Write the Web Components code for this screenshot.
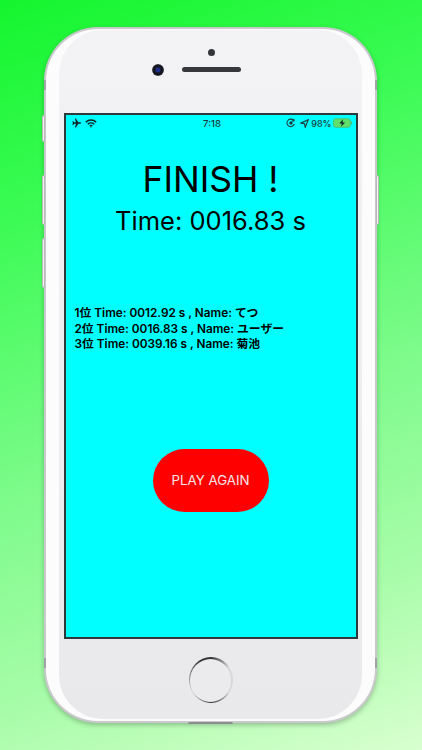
<!DOCTYPE html>
<html lang="ja">
<head>
<meta charset="utf-8">
<title>Finish</title>
<style>
  html, body { margin: 0; height: 100%; }
  body {
    width: 422px; height: 750px; overflow: hidden;
    background: linear-gradient(160deg, #14f52e 0%, #3cfb55 25%, #7cfb8a 55%, #a9fcaa 80%, #d8ffcf 100%);
    font-family: Inter, "Noto Sans CJK JP", sans-serif;
  }
</style>
</head>
<body>
<iphone-frame>
  <status-bar></status-bar>
  <finish-screen time="0016.83">
    <score-row>1位 Time: 0012.92 s , Name: てつ</score-row>
    <score-row>2位 Time: 0016.83 s , Name: ユーザー</score-row>
    <score-row>3位 Time: 0039.16 s , Name: 菊池</score-row>
  </finish-screen>
</iphone-frame>

<script>
// device body: bezel, speaker, home button, side keys
class IphoneFrame extends HTMLElement {
  constructor() {
    super();
    this.attachShadow({ mode: "open" });
  }
  connectedCallback() {
    this.shadowRoot.innerHTML = `
    <style>
      :host {
        display: block;
        position: relative;
        box-sizing: border-box;
        width: 333px;
        height: 696px;
        margin: 27px 0 0 44px;
      }
      .body {
        box-sizing: border-box;
        height: 100%;
        border-radius: 54px;
        background: #c9c9cc;
        padding: 2px;
        box-shadow: 0 2px 5px rgba(40,60,40,.32);
      }
      .rim {
        box-sizing: border-box;
        height: 100%;
        border-radius: 52px;
        background: #fcfcfd;
        padding: 1px 13px 2px;
      }
      .face {
        box-sizing: border-box;
        height: 100%;
        border-radius: 44px;
        background: linear-gradient(#f3f3f5, #e9e9eb);
        display: flex;
        flex-direction: column;
        align-items: center;
      }
      .top {
        height: 83px;
        width: 100%;
        position: relative;
      }
      .sensor {
        position: absolute; left: 149px; top: 19px;
        width: 7px; height: 7px; border-radius: 50%;
        background: #333538;
      }
      .camera {
        position: absolute; left: 93px; top: 34px;
        width: 12px; height: 12px; border-radius: 50%;
        background: radial-gradient(circle at 50% 50%, #1d2f8a 0 2px, #14161f 3px 5px, #55565c 6px);
      }
      .speaker {
        position: absolute; left: 123px; top: 37px;
        width: 59px; height: 5px; border-radius: 3px;
        background: #37383b;
      }
      .screen {
        box-sizing: border-box;
        width: 294px;
        height: 526px;
        border: 2px solid #2c3a3e;
        background: #00ffff;
        display: flex;
        flex-direction: column;
      }
      .bottom {
        flex: 1;
        display: flex;
        align-items: center;
        justify-content: center;
      }
      .home {
        box-sizing: border-box;
        width: 44px; height: 46px; border-radius: 50%;
        padding: 1.5px;
        margin-top: 2px;
        background: conic-gradient(#2f3033 0deg, #d8d8da 55deg, #d8d8da 125deg, #2f3033 180deg, #d8d8da 235deg, #a5a5a8 270deg, #2f3033 335deg, #2f3033 360deg);
      }
      .home i { display: block; height: 100%; border-radius: 50%; background: #ebebed; }
      .key {
        position: absolute;
        width: 3px;
        box-sizing: border-box;
        background: #f4f4f5;
        border: 1px solid #b8b8ba;
      }
      .band {
        position: absolute;
        width: 2px; height: 10px;
        background: #a2a3a6;
      }
      .band.tl { left: 0; top: 53px; }
      .band.tr { right: 0; top: 53px; }
      .band.bl { left: 0; top: 631px; }
      .band.br { right: 0; top: 631px; }
      .port {
        position: absolute; left: 144px; bottom: -1px;
        width: 45px; height: 2px;
        background: #8c8d90;
        border-radius: 2px 2px 0 0;
      }
    </style>
    <div class="key" style="left:-2px;top:88px;height:27px;border-radius:2px 0 0 2px"></div>
    <div class="key" style="left:-2px;top:148px;height:50px;border-radius:2px 0 0 2px"></div>
    <div class="key" style="left:-2px;top:211px;height:50px;border-radius:2px 0 0 2px"></div>
    <div class="key" style="right:-2px;top:148px;height:50px;border-radius:0 2px 2px 0"></div>
    <div class="body">
      <div class="rim">
        <div class="face">
          <div class="top">
            <div class="sensor"></div>
            <div class="camera"></div>
            <div class="speaker"></div>
          </div>
          <div class="screen"><slot></slot></div>
          <div class="bottom"><div class="home"><i></i></div></div>
        </div>
      </div>
    </div>
    <div class="band tl"></div>
    <div class="band tr"></div>
    <div class="band bl"></div>
    <div class="band br"></div>
    <div class="port"></div>
    `;
  }
}

// iOS status bar
class StatusBar extends HTMLElement {
  constructor() {
    super();
    this.attachShadow({ mode: "open" });
  }
  connectedCallback() {
    this.shadowRoot.innerHTML = `
    <style>
      :host {
        display: grid;
        grid-template-columns: 1fr auto 1fr;
        align-items: center;
        height: 16px;
        padding: 0 3px 0 6px;
        font-size: 9.500px;
        font-weight: 500;
        color: #1c3a3c;
      }
      .left, .right { display: flex; align-items: center; gap: 3px; }
      .right { justify-content: flex-end; gap: 1px; }
      .pct { font-size: 9px; }
      svg { display: block; }
    </style>
    <div class="left">
      <svg width="10" height="10" viewBox="0 0 24 24"><path fill="#0c2224" d="M22 12c0-1-1-1.800-2.500-1.800H15L9.500 1H7l2.500 9.200H5L3 7.500H1L2 12 1 16.500h2L5 13.800h4.500L7 23h2.500L15 13.800h4.500C21 13.800 22 13 22 12z"/></svg>
      <svg width="12" height="9" viewBox="0 0 24 18" fill="none" stroke="#0c2224" stroke-width="3"><path d="M1.500 6.500a15 15 0 0 1 21 0"/><path d="M5.500 10.500a9.500 9.500 0 0 1 13 0"/><path d="M9.500 14a4 4 0 0 1 5 0"/><circle cx="12" cy="16" r="1.200" fill="#0c2224" stroke="none"/></svg>
    </div>
    <div>7:18</div>
    <div class="right">
      <svg width="10" height="10" viewBox="0 0 24 24" fill="none" stroke="#1c3a3c" stroke-width="2.500"><path d="M20 14a9 9 0 1 1-1-7"/><path d="M19 2v5h-5"/><circle cx="12" cy="12" r="4" fill="#1c3a3c" stroke="none"/></svg>
      <svg width="9" height="9" style="margin:0 1px 0 3px" viewBox="0 0 24 24"><path fill="none" stroke="#1c3a3c" stroke-width="3" d="M22 2 2 11l10 1.500L14 22z"/></svg>
      <span class="pct">98%</span>
      <svg width="20" height="10" viewBox="0 0 38 18"><rect x="1" y="1" width="32" height="16" rx="4" fill="#5fe06c" stroke="#4fb968" stroke-width="1.500"/><rect x="34.500" y="6" width="2" height="6" rx="1" fill="#4fb968"/><path fill="#0c2224" d="M19 2 12 10h5l-2 6 8-8h-5z"/></svg>
    </div>
    `;
  }
}

// result view: heading, time, ranking, button
class FinishScreen extends HTMLElement {
  constructor() {
    super();
    this.attachShadow({ mode: "open" });
  }
  connectedCallback() {
    this.shadowRoot.innerHTML = `
    <style>
      :host {
        display: flex;
        flex-direction: column;
        flex: 1;
        color: #000;
      }
      h1 {
        margin: 27px 0 0;
        font-size: 35.500px;
        line-height: 44px;
        font-weight: 400;
        text-align: center;
      }
      .time {
        margin: 3px 0 0;
        font-size: 25.500px;
        line-height: 32px;
        text-align: center;
      }
      .ranks {
        margin: 69px 0 0 8px;
        display: flex;
        flex-direction: column;
      }
      button {
        align-self: center;
        margin-top: 96px;
        width: 116px;
        height: 63px;
        border: 0;
        border-radius: 32px;
        background: #ff0000;
        color: #f6e6e6;
        font: 400 13.300px Inter, sans-serif;
        padding: 0;
      }
    </style>
    <h1>FINISH !</h1>
    <p class="time">Time: ${this.getAttribute("time")} s</p>
    <div class="ranks"><slot></slot></div>
    <button>PLAY AGAIN</button>
    `;
  }
}

class ScoreRow extends HTMLElement {
  constructor() {
    super();
    this.attachShadow({ mode: "open" });
  }
  connectedCallback() {
    this.shadowRoot.innerHTML = `
    <style>
      :host {
        display: block;
        font-size: 11.800px;
        line-height: 15.500px;
        font-weight: 600;
        color: #000;
        white-space: nowrap;
        margin-left: 1px;
      }
    </style>
    <slot></slot>
    `;
  }
}

customElements.define("iphone-frame", IphoneFrame);
customElements.define("status-bar", StatusBar);
customElements.define("finish-screen", FinishScreen);
customElements.define("score-row", ScoreRow);
</script>
</body>
</html>
